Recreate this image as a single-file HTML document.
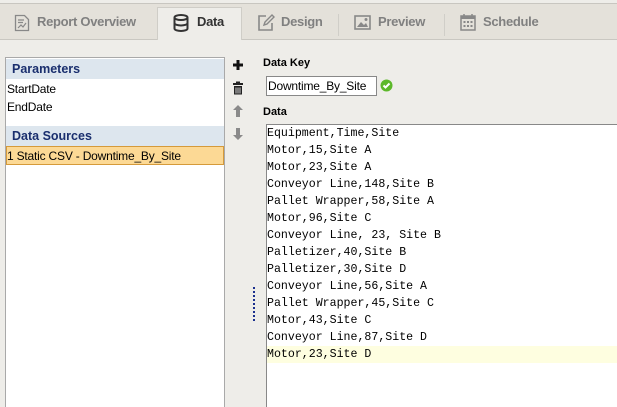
<!DOCTYPE html>
<html><head><style>
html,body{margin:0;width:617px;height:407px;overflow:hidden}
body{background:#eeede9;font-family:"Liberation Sans",sans-serif;position:relative}
.a{position:absolute}
.tabbar{left:0;top:3px;width:617px;height:35px;background:#e4e1da;border-top:1px solid #c8c6c0;border-bottom:1px solid #c9c7c1}
.tab{top:15px;font-weight:bold;font-size:13px;letter-spacing:-0.3px;color:#808080;line-height:1}
.sep{top:14px;width:1px;height:22px;background:#d0cec8}
.panel{left:5px;top:57px;width:218px;height:360px;background:#fff;border:1px solid #a9a9a9}
.hdr{left:0;width:218px;height:20px;background:#dde6ee;color:#1a2f6e;font-weight:bold;font-size:12.5px;line-height:20px;text-indent:6px}
.item{left:1px;font-size:12px;letter-spacing:-0.2px;color:#000}
.mono{font-family:"Liberation Mono",monospace;font-size:11.6px;line-height:17px;color:#000}
</style></head><body>
<div class="a tabbar"></div>
<div class="a" style="left:157px;top:7px;width:83px;height:32px;background:#eeede9;border:1px solid #cfcdc7;border-bottom:none"></div>
<svg class="a" style="left:14px;top:14px" width="16" height="18" viewBox="0 0 16 18"><path d="M1.5 1.5h9l4 4v11h-13z" fill="none" stroke="#888" stroke-width="1.3"/><path d="M4 6h6M4 8.5h5M4 14l3-3 2 2 3-4" fill="none" stroke="#888" stroke-width="1.2"/></svg>
<div class="a tab" style="left:37px">Report Overview</div>
<svg class="a" style="left:173px;top:14px" width="16" height="18" viewBox="0 0 16 18"><ellipse cx="8" cy="3.5" rx="6.5" ry="2.5" fill="none" stroke="#333" stroke-width="2"/><path d="M1.5 3.5v11c0 3.3 13 3.3 13 0v-11M1.5 9c0 3.3 13 3.3 13 0" fill="none" stroke="#333" stroke-width="2"/></svg>
<div class="a tab" style="left:197px;color:#333">Data</div>
<svg class="a" style="left:257px;top:14px" width="18" height="18" viewBox="0 0 18 18"><path d="M9 2H2v14h13V9" fill="none" stroke="#888" stroke-width="1.6"/><path d="M7 11l1-3 7-7 2 2-7 7z" fill="none" stroke="#888" stroke-width="1.4"/></svg>
<div class="a tab" style="left:281px">Design</div>
<div class="a sep" style="left:338px"></div>
<svg class="a" style="left:354px;top:15px" width="17" height="15" viewBox="0 0 17 15"><rect x="1" y="1" width="15" height="13" fill="none" stroke="#888" stroke-width="1.6"/><path d="M3 12l4-5 3 3 2-2 2 4z" fill="#888"/><circle cx="12" cy="4.5" r="1.5" fill="#888"/></svg>
<div class="a tab" style="left:378px">Preview</div>
<div class="a sep" style="left:444px"></div>
<svg class="a" style="left:460px;top:13px" width="16" height="18" viewBox="0 0 16 18"><rect x="1" y="3" width="14" height="14" fill="none" stroke="#888" stroke-width="1.5"/><rect x="1" y="3" width="14" height="3" fill="#888"/><path d="M4 1v3M12 1v3" stroke="#888" stroke-width="1.5"/><g fill="#888"><rect x="3.5" y="8" width="2" height="2"/><rect x="7" y="8" width="2" height="2"/><rect x="10.5" y="8" width="2" height="2"/><rect x="3.5" y="12" width="2" height="2"/><rect x="7" y="12" width="2" height="2"/><rect x="10.5" y="12" width="2" height="2"/></g></svg>
<div class="a tab" style="left:483px">Schedule</div>

<div class="a panel">
<div class="a hdr" style="top:1px">Parameters</div>
<div class="a item" style="top:24px">StartDate</div>
<div class="a item" style="top:42px">EndDate</div>
<div class="a hdr" style="top:68px">Data Sources</div>
<div class="a" style="left:0;top:88px;width:216px;height:17px;background:#fcd995;border:1px solid #d59a3a"></div>
<div class="a item" style="top:91px">1 Static CSV - Downtime_By_Site</div>
</div>

<svg class="a" style="left:232px;top:59px" width="12" height="12"><path d="M6 1v10M1 6h10" stroke="#111" stroke-width="3"/></svg>
<svg class="a" style="left:232px;top:81px" width="12" height="14" viewBox="0 0 12 14"><rect x="1" y="2" width="10" height="2" fill="#222"/><rect x="4" y="0.5" width="4" height="2" fill="#222"/><path d="M2 5h8v8.5H2z" fill="#222"/><path d="M4 6.5v6M6 6.5v6M8 6.5v6" stroke="#fff" stroke-width="0.8"/></svg>
<svg class="a" style="left:232px;top:104px" width="12" height="14"><path d="M6 1l5 5H8v7H4V6H1z" fill="#8a8a8a"/></svg>
<svg class="a" style="left:232px;top:127px" width="12" height="14"><path d="M6 13l5-5H8V1H4v7H1z" fill="#8a8a8a"/></svg>
<svg class="a" style="left:252px;top:286px" width="4" height="36"><path d="M2 1v34" stroke="#1a2f8e" stroke-width="2" stroke-dasharray="2 2"/></svg>

<div class="a" style="left:263px;top:57px;font-weight:bold;font-size:11px">Data Key</div>
<div class="a" style="left:266px;top:76px;width:109px;height:18px;background:#fff;border:1px solid #888;font-size:12px;letter-spacing:-0.2px;line-height:18px;text-indent:1px">Downtime_By_Site</div>
<svg class="a" style="left:380px;top:79px" width="13" height="13"><circle cx="6.5" cy="6.5" r="6" fill="#5cb82a"/><path d="M3.5 6.5l2 2 4-4" fill="none" stroke="#fff" stroke-width="2"/></svg>
<div class="a" style="left:263px;top:106px;font-weight:bold;font-size:11px">Data</div>
<div class="a" style="left:266px;top:124px;width:360px;height:290px;background:#fff;border:1px solid #888"></div>
<div class="a" style="left:267px;top:346px;width:360px;height:17px;background:#fefee0"></div>
<div class="a mono" style="left:267px;top:125px;white-space:pre">Equipment,Time,Site
Motor,15,Site A
Motor,23,Site A
Conveyor Line,148,Site B
Pallet Wrapper,58,Site A
Motor,96,Site C
Conveyor Line, 23, Site B
Palletizer,40,Site B
Palletizer,30,Site D
Conveyor Line,56,Site A
Pallet Wrapper,45,Site C
Motor,43,Site C
Conveyor Line,87,Site D
Motor,23,Site D</div>
</body></html>
